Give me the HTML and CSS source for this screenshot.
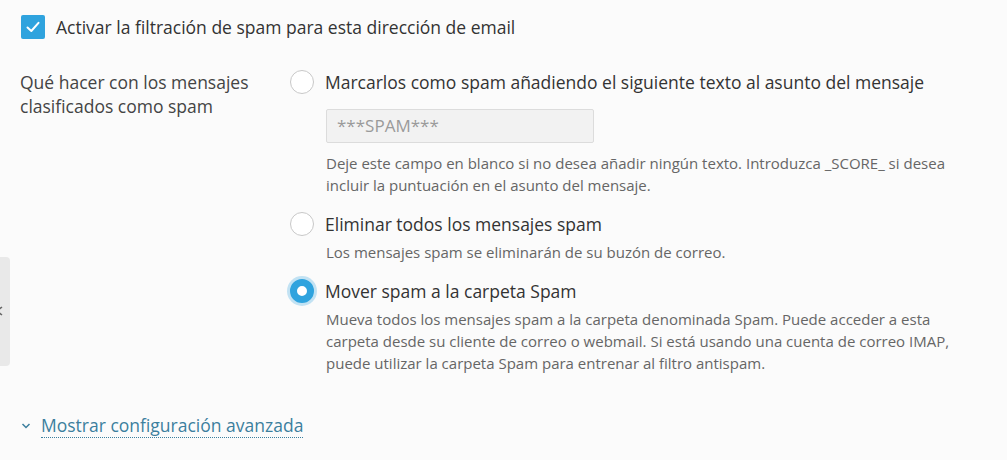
FILE: index.html
```html
<!DOCTYPE html>
<html lang="es">
<head>
<meta charset="utf-8">
<link rel="stylesheet" href="styles.css">
</head>
<body>
<div class="side-tab"><svg class="side-chev" width="10" height="12" viewBox="0 0 10 12"><path d="M7 2 L2 6 L7 10" fill="none" stroke="#666" stroke-width="1.6"/></svg></div>
<div class="page">
  <label class="check-row">
    <span class="checkbox"><svg width="16" height="16" viewBox="0 0 16 16"><path d="M2.5 8.5 L6.3 12 L13.5 3.8" fill="none" stroke="#fff" stroke-width="2" stroke-linecap="round" stroke-linejoin="round"/></svg></span>
    <span class="check-text">Activar la filtración de spam para esta dirección de email</span>
  </label>

  <div class="field">
    <div class="field-label">Qué hacer con los mensajes clasificados como spam</div>
    <div class="options">
      <div class="option">
        <div class="opt-row"><span class="radio"></span><span class="opt-text">Marcarlos como spam añadiendo el siguiente texto al asunto del mensaje</span></div>
        <div class="opt-body">
          <div class="input">***SPAM***</div>
          <div class="help help-input">Deje este campo en blanco si no desea añadir ningún texto. Introduzca _SCORE_ si desea incluir la puntuación en el asunto del mensaje.</div>
        </div>
      </div>
      <div class="option">
        <div class="opt-row"><span class="radio"></span><span class="opt-text">Eliminar todos los mensajes spam</span></div>
        <div class="opt-body">
          <div class="help">Los mensajes spam se eliminarán de su buzón de correo.</div>
        </div>
      </div>
      <div class="option">
        <div class="opt-row"><span class="radio checked"></span><span class="opt-text">Mover spam a la carpeta Spam</span></div>
        <div class="opt-body">
          <div class="help">Mueva todos los mensajes spam a la carpeta denominada Spam. Puede acceder a esta carpeta desde su cliente de correo o webmail. Si está usando una cuenta de correo IMAP, puede utilizar la carpeta Spam para entrenar al filtro antispam.</div>
        </div>
      </div>
    </div>
  </div>

  <div class="advanced">
    <svg class="adv-chev" width="10" height="8" viewBox="0 0 10 8"><path d="M1.5 2 L5 5.5 L8.5 2" fill="none" stroke="#3c7f9e" stroke-width="1.5"/></svg>
    <span class="adv-link">Mostrar configuración avanzada</span>
  </div>
</div>
</body>
</html>
```

FILE: styles.css
```css
html, body {
  margin: 0;
  padding: 0;
}
body {
  background: #fbfbfb;
  font-family: "Open Sans", "DejaVu Sans", sans-serif;
  color: #333;
  width: 1007px;
  height: 460px;
  overflow: hidden;
  position: relative;
}
.page {
  padding: 15px 0 0 20px;
}
.check-row {
  display: flex;
  align-items: center;
  gap: 11px;
  height: 24px;
  margin-left: 1px;
}
.checkbox {
  width: 24px;
  height: 24px;
  border-radius: 2px;
  background: #2fa3de;
  display: flex;
  align-items: center;
  justify-content: center;
  flex: none;
}
.check-text {
  font-size: 17.5px;
  line-height: 24px;
  color: #333;
}
.field {
  display: flex;
  margin-top: 31px;
}
.field-label {
  width: 250px;
  padding-right: 20px;
  font-size: 17.5px;
  line-height: 24px;
  color: #444;
  flex: none;
}
.options {
  display: flex;
  flex-direction: column;
  gap: 16px;
}
.opt-row {
  display: flex;
  align-items: center;
  gap: 11px;
  height: 24px;
}
.radio {
  width: 24px;
  height: 24px;
  box-sizing: border-box;
  border: 1.5px solid #c8c8c8;
  border-radius: 50%;
  background: #fff;
  flex: none;
}
.radio.checked {
  border: 7.5px solid #2fa3de;
  background: #fff;
  box-shadow: 0 0 0 3px rgba(47, 163, 222, 0.28);
}
.opt-text {
  font-size: 17.5px;
  line-height: 24px;
  color: #333;
}
.opt-body {
  padding-left: 36px;
  padding-top: 5px;
}
.input {
  margin-top: 10px;
  width: 268px;
  height: 34px;
  box-sizing: border-box;
  background: #f2f2f2;
  border: 1px solid #dcdcdc;
  border-radius: 2px;
  font-size: 17px;
  line-height: 32px;
  padding-left: 10px;
  color: #9a9a9a;
}
.help {
  font-size: 15px;
  line-height: 22px;
  color: #666;
  width: 630px;
}
.help-input {
  margin-top: 9px;
}
.advanced {
  display: flex;
  align-items: center;
  gap: 10px;
  margin-top: 40px;
  margin-left: 1px;
}
.adv-link {
  font-size: 17.5px;
  color: #3c7f9e;
  border-bottom: 1px dotted #3c7f9e;
  line-height: 23px;
}
.side-tab {
  position: absolute;
  left: 0;
  top: 257px;
  width: 10px;
  height: 109px;
  background: #e9e9e9;
  border-radius: 0 4px 4px 0;
  overflow: hidden;
}
.side-chev {
  position: absolute;
  left: -5px;
  top: 48px;
}
```
